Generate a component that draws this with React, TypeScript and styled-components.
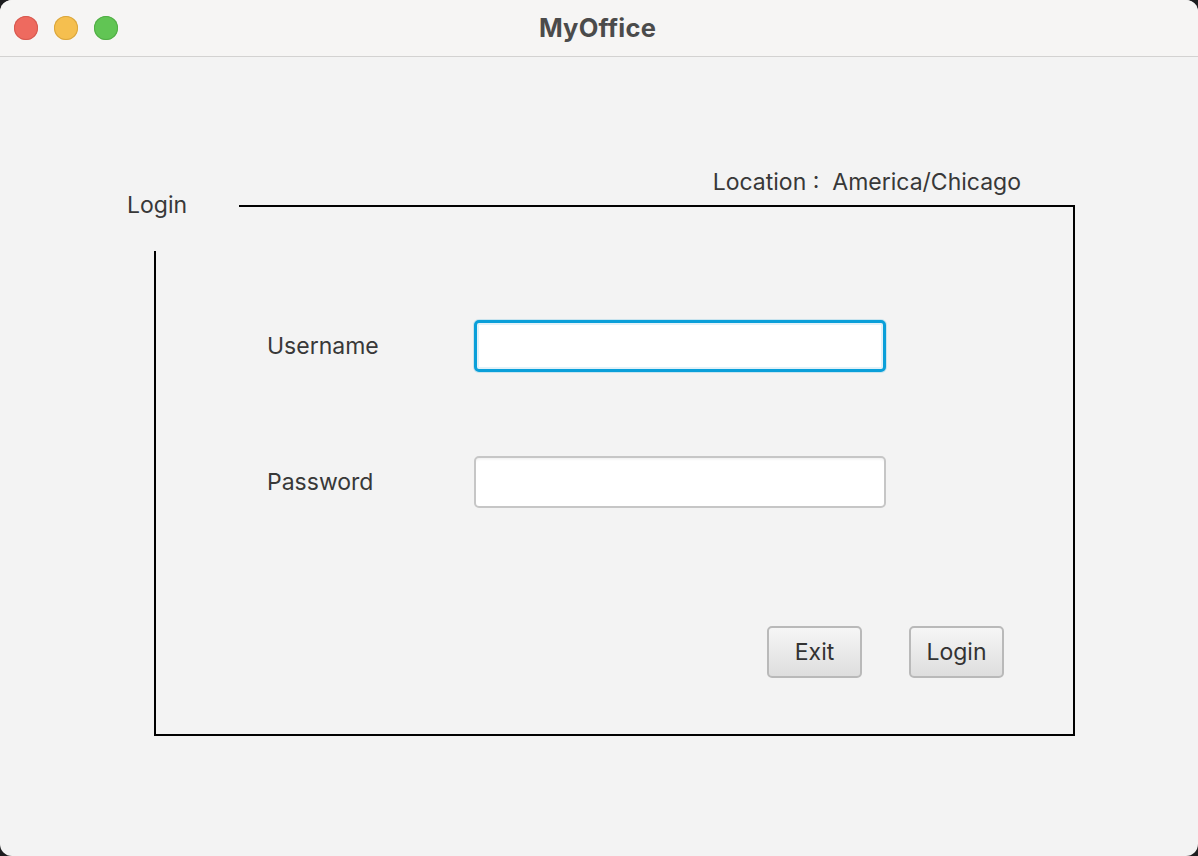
import React from "react";
import styled, { createGlobalStyle } from "styled-components";

const Global = createGlobalStyle`
  html, body { margin: 0; padding: 0; background: #1d1d1f; }
  body { font-family: Inter, "Noto Sans", sans-serif; }
  * { box-sizing: border-box; }
`;

const Window = styled.div`
  width: 1198px;
  height: 856px;
  border-radius: 12px;
  overflow: hidden;
  background: #f3f3f3;
  display: flex;
  flex-direction: column;
`;

const TitleBar = styled.div`
  position: relative;
  height: 57px;
  flex: none;
  background: #f6f5f4;
  border-bottom: 1px solid #d3d2d1;
  display: flex;
  align-items: center;
  justify-content: center;
`;

const Lights = styled.div`
  position: absolute;
  left: 14px;
  top: 16px;
  display: flex;
  gap: 16px;
`;

const Light = styled.span<{ $c: string; $b: string }>`
  width: 24px;
  height: 24px;
  border-radius: 50%;
  background: ${(p) => p.$c};
  box-shadow: inset 0 0 0 1px ${(p) => p.$b};
`;

const Title = styled.div`
  font-family: Inter, "Liberation Sans", sans-serif;
  font-weight: 700;
  font-size: 25.5px;
  color: #4b4b4b;
  letter-spacing: 0.2px;
  margin-top: -2px;
  margin-left: -3px;
`;

const Content = styled.div`
  flex: 1;
  padding-top: 108px;
  padding-left: 154px;
  display: flex;
  flex-direction: column;
`;

const LocationRow = styled.div`
  width: 867px;
  height: 40px;
  display: flex;
  justify-content: flex-end;
  font-size: 23px;
  color: #383838;
  line-height: 34px;
`;

const Frame = styled.div`
  position: relative;
  width: 921px;
  height: 531px;
  border-right: 2px solid #000;
  border-bottom: 2px solid #000;
  padding: 115px 0 0 113px;
  display: flex;
  flex-direction: column;

  &::before {
    content: "";
    position: absolute;
    top: 0;
    left: 85px;
    right: 0;
    height: 2px;
    background: #000;
  }
  &::after {
    content: "";
    position: absolute;
    left: 0;
    top: 46px;
    bottom: 0;
    width: 2px;
    background: #000;
  }
`;

const Legend = styled.div`
  position: absolute;
  left: -27px;
  top: -16px;
  font-size: 23px;
  color: #383838;
  line-height: 32px;
`;

const FieldRow = styled.div<{ $gap?: number }>`
  display: flex;
  align-items: center;
  height: 52px;
  margin-bottom: ${(p) => p.$gap ?? 0}px;
`;

const Label = styled.label`
  width: 207px;
  font-size: 23px;
  color: #383838;
`;

const Input = styled.input<{ $focus?: boolean }>`
  width: 412px;
  height: 52px;
  border-radius: 5px;
  background: #fff;
  outline: none;
  font-size: 22px;
  font-family: inherit;
  padding: 0 10px;
  border: ${(p) => (p.$focus ? "3px solid #0a9fd9" : "2px solid #c6c6c6")};
  box-shadow: ${(p) =>
    p.$focus
      ? "0 0 0 1px rgba(10,159,217,0.18), inset 0 0 0 2px #e2f1f8"
      : "inset 0 3px 3px -2px rgba(0,0,0,0.08)"};
`;

const Buttons = styled.div`
  display: flex;
  justify-content: flex-end;
  gap: 47px;
  padding-right: 69px;
`;

const Button = styled.button`
  width: 95px;
  height: 52px;
  border-radius: 5px;
  border: 2px solid #b9b9b9;
  background: linear-gradient(#f6f6f6, #dedede);
  font-family: inherit;
  font-size: 23px;
  color: #333;
  padding: 0;
`;

export default function App() {
  return (
    <>
      <Global />
      <Window>
        <TitleBar>
          <Lights>
            <Light $c="#ee6a5f" $b="#d65a50" />
            <Light $c="#f5bf4f" $b="#d9a63e" />
            <Light $c="#61c554" $b="#52ad46" />
          </Lights>
          <Title>MyOffice</Title>
        </TitleBar>
        <Content>
          <LocationRow>Location :&nbsp; America/Chicago</LocationRow>
          <Frame>
            <Legend>Login</Legend>
            <FieldRow $gap={84}>
              <Label>Username</Label>
              <Input $focus autoFocus />
            </FieldRow>
            <FieldRow $gap={118}>
              <Label>Password</Label>
              <Input type="password" />
            </FieldRow>
            <Buttons>
              <Button>Exit</Button>
              <Button>Login</Button>
            </Buttons>
          </Frame>
        </Content>
      </Window>
    </>
  );
}
